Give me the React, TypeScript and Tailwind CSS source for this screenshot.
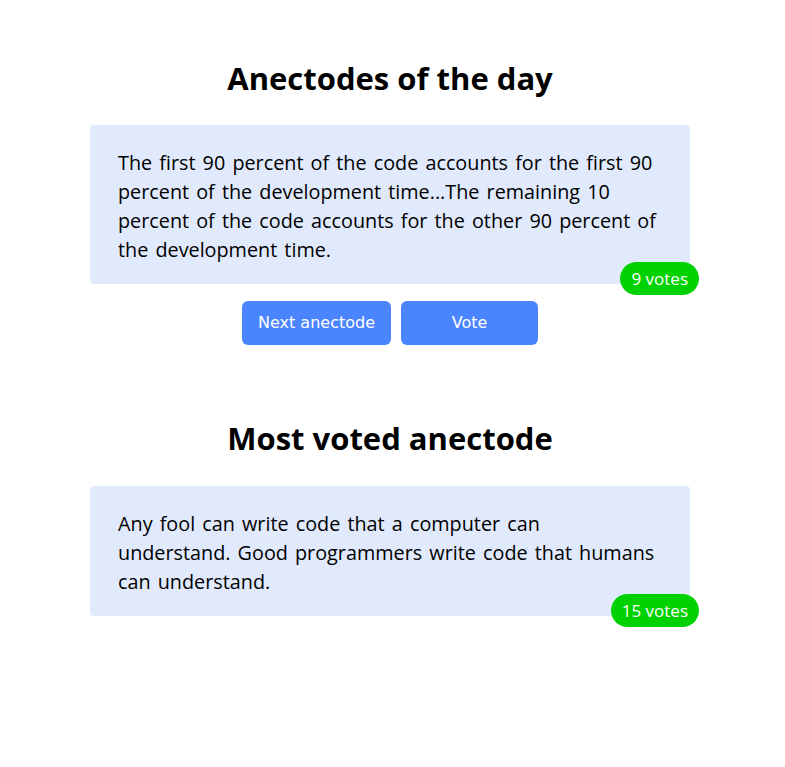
import React, { useState } from 'react';

const anecdotes = [
  'If it hurts, do it more often.',
  'Adding manpower to a late software project makes it later!',
  'The first 90 percent of the code accounts for the first 90 percent of the development time...The remaining 10 percent of the code accounts for the other 90 percent of the development time.',
  'Any fool can write code that a computer can understand. Good programmers write code that humans can understand.',
];

const AnecdoteCard: React.FC<{ text: string; votes: number }> = ({ text, votes }) => (
  <div className="relative w-[600px] rounded-[4px] bg-[#e1eafd] pl-[28px] pr-[32px] pt-[23px] pb-[20px]">
    <p className="text-[19.8px] leading-[29px] [word-spacing:2px] text-black">{text}</p>
    <span className="absolute right-[-9px] bottom-[-11px] flex h-[33px] items-center rounded-full bg-[#00d100] px-[11px] text-[17px] text-white">
      {votes} votes
    </span>
  </div>
);

export default function App() {
  const [selected, setSelected] = useState(2);
  const [votes, setVotes] = useState<number[]>([3, 4, 9, 15]);

  const top = votes.indexOf(Math.max(...votes));

  const vote = () => {
    const copy = [...votes];
    copy[selected] += 1;
    setVotes(copy);
  };

  return (
    <div className="min-h-screen w-[780px] bg-white flex flex-col items-center pt-[59px] font-['Open_Sans','Noto_Sans',sans-serif]">
      <h1 className="text-[31px] leading-[38px] font-bold text-black">Anectodes of the day</h1>
      <div className="mt-[28px]">
        <AnecdoteCard text={anecdotes[selected]} votes={votes[selected]} />
      </div>
      <div className="mt-[17px] flex gap-[10px] font-['DejaVu_Sans',sans-serif]">
        <button
          onClick={() => setSelected(Math.floor(Math.random() * anecdotes.length))}
          className="h-[44px] w-[149px] rounded-[6px] bg-[#4a84ff] text-[16px] text-white"
        >
          Next anectode
        </button>
        <button onClick={vote} className="h-[44px] w-[137px] rounded-[6px] bg-[#4a84ff] text-[16px] text-white">
          Vote
        </button>
      </div>
      <h1 className="mt-[74px] text-[31px] leading-[38px] font-bold text-black">Most voted anectode</h1>
      <div className="mt-[29px]">
        <AnecdoteCard text={anecdotes[top]} votes={votes[top]} />
      </div>
    </div>
  );
}
